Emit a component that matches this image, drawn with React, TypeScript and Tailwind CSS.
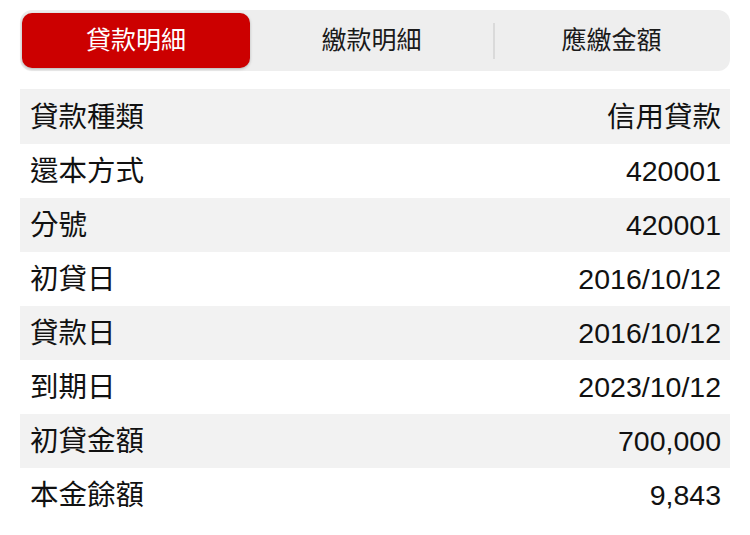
import React from 'react'

const ROWS: [string, string][] = [
  ['貸款種類', '信用貸款'],
  ['還本方式', '420001'],
  ['分號', '420001'],
  ['初貸日', '2016/10/12'],
  ['貸款日', '2016/10/12'],
  ['到期日', '2023/10/12'],
  ['初貸金額', '700,000'],
  ['本金餘額', '9,843'],
]

export default function App() {
  return (
    <div
      className="h-[535px] w-[750px] overflow-hidden bg-white px-[20px] pt-[10px] text-[#111]"
      style={{ fontFamily: '"Liberation Sans", "Noto Sans CJK TC", sans-serif' }}
    >
      <div className="flex h-[61px] items-center rounded-[12px] bg-[#eeeeee] px-[2px] text-[25px]">
        <div className="flex h-[55px] w-[228px] items-center justify-center rounded-[10px] bg-[#cc0000] text-white shadow-[0_1px_3px_rgba(0,0,0,0.25)]">
          貸款明細
        </div>
        <div className="flex w-[243px] items-center justify-center text-[#1a1a1a]">繳款明細</div>
        <div className="h-[36px] w-[2px] bg-[#dadada]" />
        <div className="flex flex-1 items-center justify-center text-[#1a1a1a]">應繳金額</div>
      </div>

      <div className="mt-[18px] border-t border-[#f0f0f0]">
        {ROWS.map(([k, v], i) => (
          <div
            key={k}
            className={`flex h-[54px] items-center justify-between pl-[10px] pr-[9px] text-[28.5px] ${
              i % 2 === 0 ? 'bg-[#f2f2f2]' : 'bg-white'
            }`}
          >
            <span>{k}</span>
            <span>{v}</span>
          </div>
        ))}
      </div>
    </div>
  )
}
